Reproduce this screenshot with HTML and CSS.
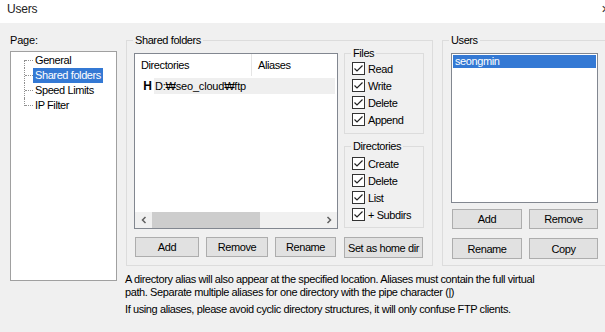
FILE: index.html
```html
<!DOCTYPE html>
<html lang="en">
<head>
  <meta charset="UTF-8">
  <title>Users</title>
  <link rel="stylesheet" href="styles.css">
</head>
<body>

  <div class="titlebar">
    <span class="title">Users</span>
    <span class="close">&#x2715;</span>
  </div>

  <div class="dialog">
    <div class="page-col">
      <div class="label">Page:</div>
      <div class="tree">
        <ul>
          <li><span>General</span></li>
          <li><span class="selected">Shared folders</span></li>
          <li><span>Speed Limits</span></li>
          <li><span>IP Filter</span></li>
        </ul>
      </div>
    </div>

    <div class="right-area">
      <div class="groups">
        <div class="group shared">
          <span class="group-title">Shared folders</span>
          <div class="shared-grid">
            <div class="left">
              <div class="listview">
                <div class="lv-header">
                  <div class="lv-col dirs">Directories</div>
                  <div class="lv-col">Aliases</div>
                </div>
                <div class="lv-row">
                  <span class="home">H</span>
                  <span class="path">D:&#8361;seo_cloud&#8361;ftp</span>
                </div>
                <div class="hscroll">
                  <span class="arrow">
                    <svg width="8" height="8" viewBox="0 0 8 8"><path d="M5.5 1 L2.5 4 L5.5 7" fill="none" stroke="#606060" stroke-width="1.5"/></svg>
                  </span>
                  <span class="thumb"></span>
                  <span class="track"></span>
                  <span class="arrow">
                    <svg width="8" height="8" viewBox="0 0 8 8"><path d="M2.5 1 L5.5 4 L2.5 7" fill="none" stroke="#606060" stroke-width="1.5"/></svg>
                  </span>
                </div>
              </div>
              <div class="btn-row">
                <button class="btn w64">Add</button>
                <button class="btn w62">Remove</button>
                <button class="btn w61">Rename</button>
              </div>
            </div>

            <div class="right">
              <div class="group files">
                <span class="group-title">Files</span>
                <label class="check"><span class="box"><svg width="11" height="11" viewBox="0 0 11 11"><path d="M1.5 5.5 L4 8 L9.5 2.5" fill="none" stroke="#222" stroke-width="1.2"/></svg></span>Read</label>
                <label class="check"><span class="box"><svg width="11" height="11" viewBox="0 0 11 11"><path d="M1.5 5.5 L4 8 L9.5 2.5" fill="none" stroke="#222" stroke-width="1.2"/></svg></span>Write</label>
                <label class="check"><span class="box"><svg width="11" height="11" viewBox="0 0 11 11"><path d="M1.5 5.5 L4 8 L9.5 2.5" fill="none" stroke="#222" stroke-width="1.2"/></svg></span>Delete</label>
                <label class="check"><span class="box"><svg width="11" height="11" viewBox="0 0 11 11"><path d="M1.5 5.5 L4 8 L9.5 2.5" fill="none" stroke="#222" stroke-width="1.2"/></svg></span>Append</label>
              </div>
              <div class="group dirs-group">
                <span class="group-title">Directories</span>
                <label class="check"><span class="box"><svg width="11" height="11" viewBox="0 0 11 11"><path d="M1.5 5.5 L4 8 L9.5 2.5" fill="none" stroke="#222" stroke-width="1.2"/></svg></span>Create</label>
                <label class="check"><span class="box"><svg width="11" height="11" viewBox="0 0 11 11"><path d="M1.5 5.5 L4 8 L9.5 2.5" fill="none" stroke="#222" stroke-width="1.2"/></svg></span>Delete</label>
                <label class="check"><span class="box"><svg width="11" height="11" viewBox="0 0 11 11"><path d="M1.5 5.5 L4 8 L9.5 2.5" fill="none" stroke="#222" stroke-width="1.2"/></svg></span>List</label>
                <label class="check"><span class="box"><svg width="11" height="11" viewBox="0 0 11 11"><path d="M1.5 5.5 L4 8 L9.5 2.5" fill="none" stroke="#222" stroke-width="1.2"/></svg></span>+ Subdirs</label>
              </div>
              <button class="btn home-btn">Set as home dir</button>
            </div>
          </div>
        </div>

        <div class="group users">
          <span class="group-title">Users</span>
          <div class="userlist">
            <div class="user selected">seongmin</div>
          </div>
          <div class="btn-row users-row">
            <button class="btn w70">Add</button>
            <button class="btn w69">Remove</button>
          </div>
          <div class="btn-row users-row second">
            <button class="btn w70">Rename</button>
            <button class="btn w69">Copy</button>
          </div>
        </div>
      </div>

      <div class="notes">
        <p>A directory alias will also appear at the specified location. Aliases must contain the full virtual<br>path. Separate multiple aliases for one directory with the pipe character (|)</p>
        <p>If using aliases, please avoid cyclic directory structures, it will only confuse FTP clients.</p>
      </div>
    </div>
  </div>

</body>
</html>
```

FILE: styles.css
```css
body {
  margin: 0;
  width: 605px;
  height: 332px;
  overflow: hidden;
  background: #f0f0f0;
  font-family: 'Liberation Sans', Arial, sans-serif;
  font-size: 11px;
  letter-spacing: -0.4px;
  color: #000;
}

.titlebar {
  height: 23px;
  background: #fff;
  display: flex;
  justify-content: space-between;
  align-items: flex-start;
  padding-left: 7px;
}

.title {
  font-size: 12px;
  line-height: 18px;
  color: #222;
  letter-spacing: -0.2px;
}

.close {
  font-size: 11px;
  line-height: 18px;
  margin-right: -5px;
  color: #333;
}

.dialog {
  display: flex;
  padding-left: 10px;
}

/* left page tree */
.page-col {
  width: 107px;
  flex-shrink: 0;
}

.label {
  margin-top: 10px;
  height: 18px;
  line-height: 14px;
  letter-spacing: -0.2px;
}

.tree {
  box-sizing: border-box;
  height: 230px;
  background: #fff;
  border: 1px solid #a0a0a0;
  padding: 1px 0 0 13px;
}

.tree ul {
  list-style: none;
  margin: 0;
  padding: 0;
}

.tree li {
  position: relative;
  height: 15px;
  display: flex;
  align-items: center;
}

.tree li::before {
  content: '';
  width: 8px;
  margin-left: 1px;
  border-top: 1px dotted #909090;
}

.tree li::after {
  content: '';
  position: absolute;
  left: 0;
  top: 0;
  bottom: 0;
  border-left: 1px dotted #909090;
}

.tree li:first-child::after { top: 7px; }
.tree li:last-child::after { bottom: 7px; }

.tree li span {
  padding: 0 2px;
  line-height: 15px;
  height: 15px;
}

.selected {
  background: #3479d4;
  color: #fff;
}

/* right area */
.right-area {
  margin-left: 9px;
  display: flex;
  flex-direction: column;
}

.groups {
  display: flex;
  margin-top: 17px;
}

.group {
  position: relative;
  box-sizing: border-box;
  border: 1px solid #dcdcdc;
}

.group-title {
  position: absolute;
  top: -8px;
  left: 6px;
  padding: 0 2px;
  background: #f0f0f0;
  line-height: 14px;
}

.shared {
  width: 307px;
  height: 226px;
  padding: 12px 0 0 7px;
  flex-shrink: 0;
}

.shared-grid {
  display: grid;
  grid-template-columns: 204px 80px;
  column-gap: 6px;
}

.listview {
  box-sizing: border-box;
  height: 176px;
  background: #fff;
  border: 1px solid #828790;
  display: flex;
  flex-direction: column;
}

.lv-header {
  display: flex;
  height: 22px;
}

.lv-col {
  line-height: 22px;
  padding-left: 6px;
}

.lv-col.dirs {
  width: 110px;
  border-right: 1px solid #e5e5e5;
}

.lv-row {
  margin-top: 2px;
  height: 16px;
  display: flex;
  align-items: center;
}

.home {
  width: 19px;
  text-align: right;
  padding-right: 2px;
  box-sizing: border-box;
  font-size: 12px;
  font-weight: bold;
  letter-spacing: 0;
}

.path {
  flex: 1;
  margin-right: 2px;
  height: 16px;
  line-height: 16px;
  padding-left: 1px;
  letter-spacing: -0.2px;
  background: #efefef;
}

.hscroll {
  margin-top: auto;
  height: 16px;
  display: flex;
  align-items: stretch;
  background: #f0f0f0;
}

.hscroll .arrow {
  width: 17px;
  display: flex;
  align-items: center;
  justify-content: center;
}

.hscroll .thumb {
  width: 108px;
  background: #cdcdcd;
}

.hscroll .track {
  flex: 1;
}

.btn-row {
  display: flex;
  gap: 7px;
  margin-top: 8px;
  margin-left: 1px;
}

.btn {
  box-sizing: border-box;
  height: 20px;
  padding: 0;
  background: #e1e1e1;
  border: 1px solid #adadad;
  font-family: inherit;
  font-size: 11px;
  letter-spacing: -0.4px;
  color: #000;
}

.w64 { width: 64px; }
.w62 { width: 62px; }
.w61 { width: 61px; }
.w70 { width: 70px; }
.w69 { width: 69px; }

.files {
  height: 81px;
  padding: 6px 0 0 7px;
}

.dirs-group {
  margin-top: 12px;
  height: 82px;
  padding: 8px 0 0 7px;
}

.check {
  display: flex;
  align-items: center;
  height: 17px;
  gap: 3px;
}

.box {
  box-sizing: border-box;
  width: 13px;
  height: 13px;
  border: 1px solid #333;
  background: #fff;
  display: flex;
}

.home-btn {
  display: block;
  width: 79px;
  height: 21px;
  margin-top: 9px;
}

.users {
  margin-left: 9px;
  width: 170px;
  height: 226px;
  flex-shrink: 0;
  padding: 12px 0 0 8px;
}

.userlist {
  box-sizing: border-box;
  width: 147px;
  height: 150px;
  background: #fff;
  border: 1px solid #828790;
  padding: 1px;
}

.user {
  height: 13px;
  line-height: 13px;
  padding-left: 2px;
}

.users-row {
  margin-top: 6px;
}

.users-row.second {
  margin-top: 9px;
}

.users-row.second .btn {
  height: 21px;
}

.notes {
  margin-left: -1px;
  margin-top: 7px;
}

.notes p {
  margin: 0 0 4px;
  line-height: 13px;
}
```
